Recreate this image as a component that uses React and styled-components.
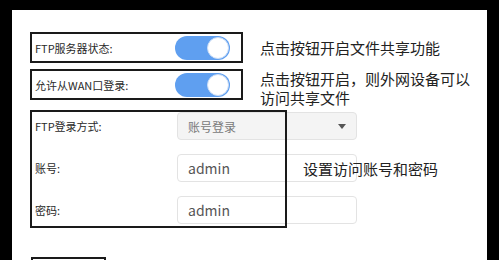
import React from 'react';
import styled, { createGlobalStyle } from 'styled-components';

const Global = createGlobalStyle`
html, body {
  margin: 0;
  background: #000;
  overflow: hidden;
}
body {
  font-family: "Noto Sans CJK SC", "Noto Sans", sans-serif;
}
`;

const Page = styled.div`
padding: 10px 0 0 12px;
height: 260px;
box-sizing: border-box;
`;

const Panel = styled.div`
width: 475px;
height: 250px;
background: #fff;
padding: 22px 0 0 18px;
box-sizing: border-box;
overflow: hidden;
`;

const Switches = styled.div`
display: flex;
flex-direction: column;
gap: 6px;
`;

const SwitchRow = styled.div`
display: flex;
align-items: ${p => (p.$top ? 'flex-start' : 'center')};
gap: 17px;
`;

const SwitchBox = styled.div`
width: 213px;
height: 31px;
flex: none;
box-sizing: border-box;
border: 2px solid #1a1a1a;
display: flex;
align-items: center;
justify-content: space-between;
padding: 0 11px 0 3px;
`;

const Label = styled.span`
font-size: 11px;
color: #2a2a2a;
white-space: nowrap;
`;

const Toggle = styled.div`
width: 55px;
height: 24px;
border-radius: 12px;
background: #5f9ff0;
display: flex;
align-items: center;
justify-content: flex-end;
padding: 0 1px;
box-sizing: border-box;
`;

const Knob = styled.div`
width: 22px;
height: 22px;
border-radius: 50%;
background: #fff;
box-sizing: border-box;
border: 1px solid #c9dcf6;
`;

const Hint = styled.div`
font-size: 15px;
line-height: 19px;
color: #222;
`;

const FormBox = styled.div`
position: relative;
width: 257px;
margin-top: 3px;
padding: 2px 0 4px 5px;
box-sizing: border-box;
display: flex;
flex-direction: column;
gap: 14px;
&::after {
  content: '';
  position: absolute;
  inset: 0;
  border: 2px solid #1a1a1a;
  pointer-events: none;
  z-index: 1;
}
`;

const FormRow = styled.div`
position: relative;
display: flex;
align-items: center;
height: 28px;
`;

const FormLabel = styled(Label)`
width: 142px;
flex: none;
`;

const Select = styled.div`
width: 180px;
height: 28px;
flex: none;
box-sizing: border-box;
background: #f4f4f4;
border: 1px solid #e3e3e3;
border-radius: 4px;
padding: 0 10px;
display: flex;
align-items: center;
justify-content: space-between;
font-size: 12px;
color: #7a7a7a;
`;

const Caret = styled.span`
width: 0;
height: 0;
border-left: 4px solid transparent;
border-right: 4px solid transparent;
border-top: 5px solid #555;
`;

const Input = styled.input`
width: 180px;
height: 28px;
flex: none;
box-sizing: border-box;
background: #fff;
border: 1px solid #e3e3e3;
border-radius: 4px;
padding: 0 10px;
font-family: inherit;
font-size: 14px;
color: #555;
outline: none;
`;

const Note = styled(Hint)`
position: absolute;
left: 268px;
top: 50%;
transform: translateY(-50%);
white-space: nowrap;
z-index: 2;
`;

const SaveButton = styled.div`
width: 75px;
height: 30px;
margin: 29px 0 0 1px;
box-sizing: border-box;
border: 2px solid #1a1a1a;
background: #fff;
`;

export default function App() {
  return (
    <Page>
      <Global />
      <Panel>
        <Switches>
          <SwitchRow>
            <SwitchBox>
              <Label>FTP服务器状态:</Label>
              <Toggle><Knob /></Toggle>
            </SwitchBox>
            <Hint>点击按钮开启文件共享功能</Hint>
          </SwitchRow>
          <SwitchRow $top>
            <SwitchBox>
              <Label>允许从WAN口登录:</Label>
              <Toggle><Knob /></Toggle>
            </SwitchBox>
            <Hint>点击按钮开启，则外网设备可以<br />访问共享文件</Hint>
          </SwitchRow>
        </Switches>
        <FormBox>
          <FormRow>
            <FormLabel>FTP登录方式:</FormLabel>
            <Select>
              <span>账号登录</span>
              <Caret />
            </Select>
          </FormRow>
          <FormRow>
            <FormLabel>账号:</FormLabel>
            <Input defaultValue="admin" />
            <Note>设置访问账号和密码</Note>
          </FormRow>
          <FormRow>
            <FormLabel>密码:</FormLabel>
            <Input defaultValue="admin" />
          </FormRow>
        </FormBox>
        <SaveButton />
      </Panel>
    </Page>
  );
}
